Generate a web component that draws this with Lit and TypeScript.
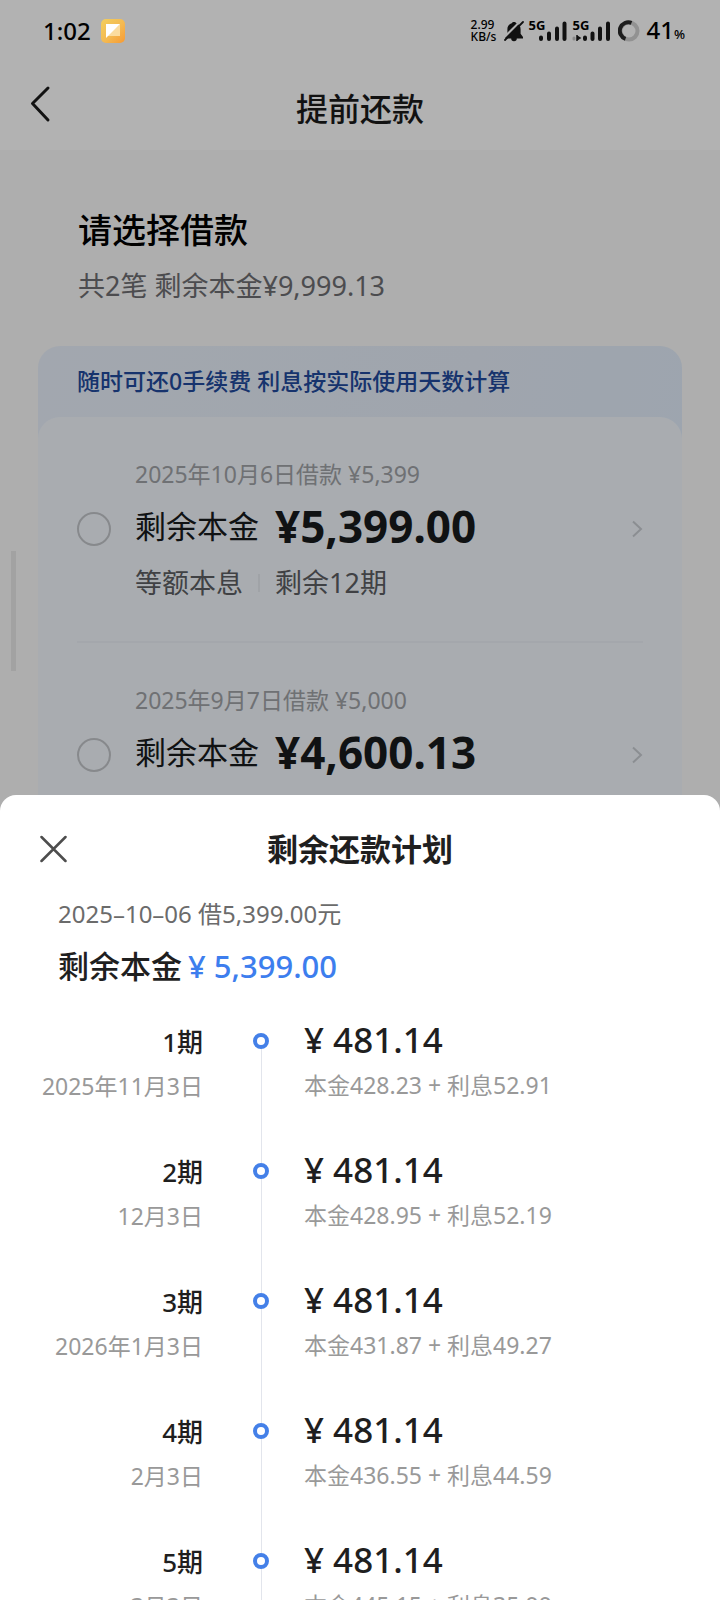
import { LitElement, html, svg, css } from "lit";
import { customElement, property } from "lit/decorators.js";

interface Loan {
  id: string;
  date: string;
  remaining: string;
  method: string;
  terms: string;
}

interface Term {
  name: string;
  date: string;
  amount: string;
  detail: string;
}

const loans: Loan[] = [
  { id: "a", date: "2025年10月6日借款 ¥5,399", remaining: "¥5,399.00", method: "等额本息", terms: "剩余12期" },
  { id: "b", date: "2025年9月7日借款 ¥5,000", remaining: "¥4,600.13", method: "等额本息", terms: "剩余11期" },
];

const terms: Term[] = [
  { name: "1期", date: "2025年11月3日", amount: "¥ 481.14", detail: "本金428.23 + 利息52.91" },
  { name: "2期", date: "12月3日", amount: "¥ 481.14", detail: "本金428.95 + 利息52.19" },
  { name: "3期", date: "2026年1月3日", amount: "¥ 481.14", detail: "本金431.87 + 利息49.27" },
  { name: "4期", date: "2月3日", amount: "¥ 481.14", detail: "本金436.55 + 利息44.59" },
  { name: "5期", date: "3月3日", amount: "¥ 481.14", detail: "本金445.15 + 利息35.99" },
];

@customElement("status-bar")
class StatusBar extends LitElement {
  static styles = css`
    :host {
      display: flex;
      align-items: center;
      height: 62px;
      padding: 0 35px 0 43px;
      box-sizing: border-box;
      color: #000;
    }
    .time {
      font-size: 24px;
      font-weight: 500;
      line-height: 30px;
    }
    .app {
      margin-left: 10px;
    }
    .right {
      display: flex;
      align-items: center;
      margin-left: auto;
    }
    .speed {
      font-size: 12px;
      line-height: 12px;
      font-weight: 500;
      margin-right: 8px;
    }
    .speed span {
      display: block;
    }
    svg {
      display: block;
    }
    .signal {
      position: relative;
      margin-left: 4px;
    }
    .net {
      position: absolute;
      left: 0;
      top: -1px;
      font-size: 13px;
      line-height: 12px;
      font-weight: 700;
    }
    .ring {
      margin-left: 6px;
    }
    .level {
      margin-left: 6px;
      padding-top: 2px;
      font-size: 24px;
      line-height: 30px;
      font-weight: 500;
    }
    .pct {
      font-size: 13px;
    }
  `;

  private signal(dual: boolean) {
    return html`<span class="signal">
      <svg width="40" height="22" viewBox="0 0 40 22">
        ${dual
          ? svg`<path d="M2 18v1" stroke="#8a8a8a" stroke-width="3" stroke-linecap="round" />
              <path d="M5 15v6M5 16l3 2l-3 2" stroke="#111" stroke-width="1.500" fill="#111" />`
          : null}
        <path
          d="M${dual ? "13 17.500v1.500M20.500 13.500v5.500M28 8.500v10.500M36 3.500v15.500" : "13 17.500v1.500M21 13.500v5.500M29 8.500v10.500M36.500 3.500v15.500"}"
          fill="none"
          stroke="#111"
          stroke-width="4"
          stroke-linecap="round"
        />
      </svg>
      <span class="net">5G</span>
    </span>`;
  }

  render() {
    return html`
      <span class="time">1:02</span>
      <svg class="app" width="24" height="24" viewBox="0 0 24 24">
        <defs>
          <linearGradient id="g" x1="0" y1="0" x2="1" y2="1">
            <stop offset="0" stop-color="#f3cf5e" />
            <stop offset="0.55" stop-color="#f4b951" />
            <stop offset="1" stop-color="#f79a33" />
          </linearGradient>
        </defs>
        <rect width="24" height="24" rx="5" fill="url(#g)" />
        <path d="M19 5v12H5z" fill="#fbdc9f" />
        <path d="M5 5h14L5 19z" fill="#fff" />
      </svg>
      <div class="right">
        <div class="speed"><span>2.99</span><span>KB/s</span></div>
        <svg width="20" height="21" viewBox="0 0 20 21">
          <path
            d="M10 1c1 0 1.900.5 2.200 1.300 2.800.8 4.400 3 4.400 5.900v4.600l2.400 3.300v1.400H12.800a2.800 2.800 0 0 1-5.600 0H1v-1.400l2.400-3.300V8.200c0-2.900 1.600-5.100 4.400-5.900C8.100 1.500 9 1 10 1z"
            fill="#111"
          />
          <path d="M-1 17.500L16.500 0" stroke="#b2b2b2" stroke-width="2" />
          <path d="M1 19L19 1" stroke="#111" stroke-width="1.800" stroke-linecap="round" />
        </svg>
        ${this.signal(false)} ${this.signal(true)}
        <svg class="ring" width="22" height="22" viewBox="0 0 22 22" fill="none" stroke-width="4">
          <circle cx="11" cy="11" r="8.500" stroke="#929292" />
          <path d="M13.500 2.900A8.500 8.500 0 1 0 7.500 18.800" stroke="#1c1c1c" />
        </svg>
        <span class="level">41<span class="pct">%</span></span>
      </div>
    `;
  }
}

@customElement("loan-row")
class LoanRow extends LitElement {
  @property({ attribute: false }) loan!: Loan;

  static styles = css`
    :host {
      display: grid;
      grid-template-columns: 34px 1fr 12px;
      column-gap: 24px;
      align-items: center;
      height: 226px;
      box-sizing: border-box;
      border-bottom: 2px solid #ebf0f6;
    }
    .pick {
      appearance: none;
      width: 34px;
      height: 34px;
      margin: 0;
      border: 2px solid #c2c5c9;
      border-radius: 50%;
    }
    .info {
      display: grid;
      grid-template-rows: 34px 70px 44px;
      align-items: center;
      padding-top: 4px;
    }
    .date {
      font-size: 23px;
      line-height: 34px;
      color: #a0a2a6;
    }
    .main {
      display: flex;
      align-items: center;
      gap: 16px;
      font-size: 31px;
      line-height: 40px;
      color: #181a1c;
    }
    .sum {
      font-size: 44px;
      line-height: 50px;
      font-weight: 700;
    }
    .sub {
      display: flex;
      align-items: center;
      gap: 15px;
      font-size: 27px;
      line-height: 36px;
      color: #5c5e62;
    }
    .bar {
      width: 2px;
      height: 18px;
      background: #e6eaf0;
    }
    .go {
      display: block;
    }
  `;

  render() {
    const { id, date, remaining, method, terms } = this.loan;
    return html`
      <input class="pick" type="radio" name="loan" id=${id} aria-label=${date} />
      <label class="info" for=${id}>
        <span class="date">${date}</span>
        <span class="main">剩余本金<b class="sum">${remaining}</b></span>
        <span class="sub">${method}<i class="bar"></i>${terms}</span>
      </label>
      <svg class="go" width="12" height="18" viewBox="0 0 12 18">
        <path d="M2 1.500L10 9L2 16.500" fill="none" stroke="#c8ccd1" stroke-width="2" />
      </svg>
    `;
  }
}

@customElement("app-root")
class AppRoot extends LitElement {
  static styles = css`
    :host {
      display: block;
      position: relative;
      height: 100vh;
      overflow: hidden;
      background: #f9f9f9;
      font-family: "Noto Sans", "Noto Sans CJK SC", sans-serif;
    }
    button {
      display: block;
      padding: 0;
      border: 0;
      background: none;
      cursor: pointer;
    }
    svg {
      display: block;
    }
    h1,
    h2,
    p,
    ol {
      margin: 0;
      padding: 0;
      font-weight: 400;
    }
    .top {
      background: #fff;
    }
    status-bar {
      position: relative;
      z-index: 2;
    }
    .nav {
      display: grid;
      grid-template-columns: 32px 1fr 32px;
      align-items: center;
      height: 88px;
      padding: 0 27px;
    }
    .nav button {
      padding-bottom: 4px;
    }
    .nav h1 {
      text-align: center;
      font-size: 32px;
      line-height: 44px;
      font-weight: 500;
      color: #1b1b1b;
      padding-top: 6px;
    }
    .intro {
      padding: 56px 78px 40px;
    }
    .intro h2 {
      font-size: 34px;
      line-height: 48px;
      font-weight: 500;
      color: #000;
    }
    .intro p {
      margin-top: 12px;
      font-size: 27px;
      line-height: 40px;
      color: #6e6e72;
    }
    .card {
      margin: 0 38px;
      border-radius: 22px;
      background: linear-gradient(100deg, #e9f0fb, #e5edf8 60%, #e0edfc);
    }
    .tip {
      padding: 0 39px;
      font-size: 23px;
      line-height: 71px;
      font-weight: 500;
      color: #214a9c;
    }
    .loans {
      padding: 0 39px;
      border-radius: 22px;
      background: #f2f7fd;
    }
    .scrim {
      position: absolute;
      inset: 0;
      z-index: 1;
      background: rgba(0, 0, 0, 0.3);
    }
    .thumb {
      position: absolute;
      z-index: 1;
      left: 11px;
      top: 551px;
      width: 5px;
      height: 120px;
      background: #a2a2a2;
    }
    .sheet {
      position: absolute;
      z-index: 3;
      inset: auto 0 0;
      height: 805px;
      overflow: hidden;
      border-radius: 16px 16px 0 0;
      background: #fff;
      color: #1f1f1f;
    }
    .head {
      display: grid;
      grid-template-columns: 28px 1fr 28px;
      align-items: center;
      height: 108px;
      padding: 0 39px;
    }
    .head h2 {
      text-align: center;
      font-size: 31px;
      line-height: 44px;
      font-weight: 700;
    }
    .summary {
      padding: 0 58px;
    }
    .when {
      font-size: 24px;
      line-height: 22px;
      color: #6b6b6b;
    }
    .left {
      display: flex;
      gap: 6px;
      margin-top: 19px;
      font-size: 31px;
      line-height: 44px;
      font-weight: 500;
    }
    .left strong {
      font-weight: 500;
      color: #3d7eee;
    }
    .plan {
      list-style: none;
      padding-top: 30px;
    }
    .term {
      display: grid;
      grid-template-columns: 218px 30px 1fr;
      column-gap: 28px;
      height: 130px;
    }
    .a {
      padding-right: 15px;
      text-align: right;
    }
    .name {
      font-size: 26px;
      line-height: 48px;
      font-weight: 500;
    }
    .amount {
      font-size: 35px;
      line-height: 44px;
      font-weight: 500;
    }
    .note {
      font-size: 23px;
      line-height: 40px;
      color: #999;
    }
    .amount + .note {
      line-height: 46px;
    }
    .rail {
      display: flex;
      flex-direction: column;
      align-items: center;
      padding-top: 15px;
    }
    .rail::before {
      content: "";
      width: 8px;
      height: 8px;
      border: 4px solid #4480e8;
      border-radius: 50%;
    }
    .rail::after {
      content: "";
      flex: 1;
      width: 1px;
      margin-bottom: -15px;
      background: #e2e5ec;
    }
  `;

  render() {
    return html`
      <header class="top">
        <status-bar></status-bar>
        <div class="nav">
          <button aria-label="返回">
            <svg width="26" height="38" viewBox="0 0 26 38">
              <path
                d="M21 3L5.500 18.500L21 35"
                fill="none"
                stroke="#1b1b1b"
                stroke-width="3"
                stroke-linecap="round"
                stroke-linejoin="round"
              />
            </svg>
          </button>
          <h1>提前还款</h1>
        </div>
      </header>
      <main>
        <section class="intro">
          <h2>请选择借款</h2>
          <p>共2笔 剩余本金¥9,999.13</p>
        </section>
        <section class="card">
          <p class="tip">随时可还0手续费 利息按实际使用天数计算</p>
          <div class="loans">${loans.map((l) => html`<loan-row .loan=${l}></loan-row>`)}</div>
        </section>
      </main>
      <div class="scrim"></div>
      <div class="thumb"></div>
      <section class="sheet" role="dialog" aria-labelledby="plan-title">
        <div class="head">
          <button aria-label="关闭">
            <svg width="28" height="28" viewBox="0 0 28 28">
              <path d="M2.500 2L26.500 26M26.500 2L2.500 26" stroke="#4d4d4d" stroke-width="2.500" stroke-linecap="round" />
            </svg>
          </button>
          <h2 id="plan-title">剩余还款计划</h2>
        </div>
        <div class="summary">
          <p class="when">2025–10–06 借5,399.00元</p>
          <p class="left">剩余本金<strong>¥ 5,399.00</strong></p>
        </div>
        <ol class="plan">
          ${terms.map(
            (t) => html`<li class="term">
              <div class="a">
                <div class="name">${t.name}</div>
                <div class="note">${t.date}</div>
              </div>
              <div class="rail"></div>
              <div>
                <div class="amount">${t.amount}</div>
                <div class="note">${t.detail}</div>
              </div>
            </li>`
          )}
        </ol>
      </section>
    `;
  }
}
